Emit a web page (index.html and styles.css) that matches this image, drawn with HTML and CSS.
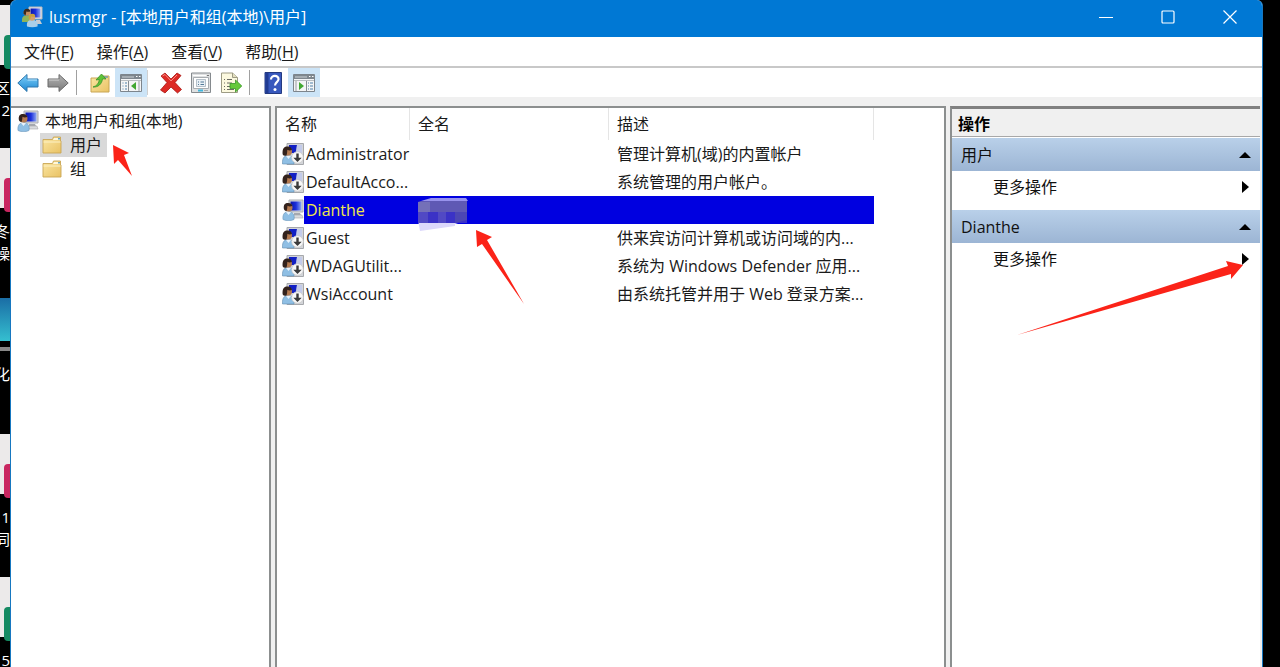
FILE: index.html
```html
<!DOCTYPE html>
<html lang="zh-Hans">
<head>
    <meta charset="UTF-8">
    <title>lusrmgr - [本地用户和组(本地)\用户]</title>
    <meta name="viewport" content="width=device-width, initial-scale=1">
    <link rel="stylesheet" href="styles.css">
</head>
<body>
    <!-- shared icons -->
    <svg class="defs" aria-hidden="true">
        <linearGradient id="g-folder" x1="0" y1="0" x2="1" y2="1">
            <stop offset="0" stop-color="#fbe7a4"/><stop offset="1" stop-color="#e9c264"/>
        </linearGradient>
        <linearGradient id="g-blue" x1="0" y1="0" x2="0" y2="1">
            <stop offset="0" stop-color="#7fd0fa"/><stop offset="1" stop-color="#1c86d1"/>
        </linearGradient>
        <linearGradient id="g-gray" x1="0" y1="0" x2="0" y2="1">
            <stop offset="0" stop-color="#b4b4b4"/><stop offset="1" stop-color="#7a7a7a"/>
        </linearGradient>
        <linearGradient id="g-screen" x1="0" y1="0" x2="1" y2="0">
            <stop offset="0" stop-color="#0a14a8"/><stop offset=".5" stop-color="#1c30dc"/><stop offset="1" stop-color="#8fa8f2"/>
        </linearGradient>
        <symbol id="user" viewBox="0 0 22 22">
            <path d="M7 1h14v12H7z" fill="#d4d6da" stroke="#a9acb2"/>
            <path d="M8.500 2.500h11v9h-11z" fill="url(#g-screen)"/>
            <path d="M12 14h6l1 2h-7z" fill="#a5a9b0"/>
            <path d="M11 16h9l1 3h-9z" fill="#d9dbde" stroke="#aaa" stroke-width=".6"/>
            <path d="M1 20.500c-.6-4 .8-6.500 3-7.500h4.500c3 .8 4.200 3 3.500 7.500-3 1.600-8 1.600-11 0z" fill="#8fbfe4" stroke="#6b97bb" stroke-width=".6"/>
            <path d="M4 13l2.500 3 2.500-3z" fill="#e9f3fb"/>
            <circle cx="6.500" cy="8.500" r="4" fill="#b47a50"/>
            <path d="M1.800 9.500C1.500 5.500 3 4 6 4c2.500 0 4 1 4.300 3-2 .6-3.600.5-4.800-.2-.2 2-.4 4-1 5.200-1.500-.2-2.500-1-2.700-2.500z" fill="#33221c"/>
        </symbol>
        <symbol id="user-off" viewBox="0 0 22 22">
            <path d="M5 .5h16.500v21H5z" fill="#d3d5d9" stroke="#a6a8ac"/>
            <path d="M7 2h8l-1 8H7z" fill="#1220c4"/>
            <path d="M15 2h5v8h-6z" fill="#c3cbea"/>
            <path d="M.5 21c-.4-4 .6-7 3-8h5c3 .8 4 3.500 3.500 8z" fill="#8fbfe4" stroke="#5f8bb0" stroke-width=".6"/>
            <path d="M4 13l2.500 3 2.500-3z" fill="#e9f3fb"/>
            <circle cx="6" cy="8.500" r="4" fill="#b47a50"/>
            <path d="M.6 11C.2 5 2.500 3 6 3.500c2.500.2 3.700 1.500 4 3.500-2 .6-3.600.5-4.600-.2-.2 2-.4 4.500-1 6-2-.2-3.600-.3-3.800-1.800z" fill="#33221c"/>
            <circle cx="15.500" cy="14.500" r="5.800" fill="#f8f8f8" stroke="#c9c9c9" stroke-width=".8"/>
            <path d="M14.300 10.500h2.400v4.300h3l-4.200 4.200-4.200-4.200h3z" fill="#3a3a3a"/>
        </symbol>
        <symbol id="folder" viewBox="0 0 20 18">
            <path d="M1 3.500h9.500l1-2.500h7v4H19v12H1z" fill="url(#g-folder)" stroke="#c9a655" stroke-width=".9"/>
            <path d="M12 2h6v2h-7z" fill="#fff7dc"/>
            <path d="M16 2h2v1.500h-2z" fill="#68a7bd"/>
            <path d="M1.500 6h17" stroke="#fdf1c4"/>
        </symbol>
    </svg>

    <div class="desktop">
        <div class="shortcuts">
            <div class="shortcut">
                <div class="thumb"><span class="badge green"></span></div>
                <div class="caption">区<br>2</div>
            </div>
            <div class="shortcut">
                <div class="thumb"><span class="badge pink"></span></div>
                <div class="caption">冬<br>操</div>
            </div>
            <div class="shortcut">
                <div class="thumb photo"></div>
                <div class="caption">化</div>
            </div>
            <div class="shortcut">
                <div class="thumb"><span class="badge pink"></span></div>
                <div class="caption">1<br>同</div>
            </div>
            <div class="shortcut">
                <div class="thumb"><span class="badge green"></span></div>
                <div class="caption">5</div>
            </div>
        </div>

        <div class="window">
            <header class="titlebar">
                <svg class="app-icon" viewBox="0 0 22 22">
                    <path d="M8 1h13v12H8z" fill="#e2e4e8" stroke="#b4b8be"/>
                    <path d="M9.500 2.500h10v9h-10z" fill="url(#g-screen)"/>
                    <path d="M15 14h4l2 4h-6z" fill="#c8cbd0"/>
                    <path d="M1 16c-.4-4 .6-6 3-6.500h4c2 .5 3 2.500 3 6.500z" fill="#8db45c"/>
                    <circle cx="6" cy="6.500" r="3.300" fill="#c58d5e"/>
                    <path d="M2.500 7.500C2.200 4 4 2.500 6.500 2.700 9 3 9.500 4.500 9.300 5.500c-2 .5-3 .3-4 0-.2 2-.5 3-1 4z" fill="#3b2a1d"/>
                    <path d="M6 20.500c-.5-4 .8-6 3.500-6.500h3.500c2.500.5 4 2.500 3.500 6.500-3 1-7.500 1-10.500 0z" fill="#a9cfe9"/>
                    <circle cx="11" cy="11.500" r="3.200" fill="#d3a06f"/>
                    <path d="M7.600 12C7.400 9 9 7.700 11.200 7.700c2.300 0 3.300 1.300 3.100 3-2 .3-3.300.2-4.300-.4-.2 1.700-.5 2.600-1 3.500z" fill="#c9a13c"/>
                </svg>
                <h1 class="title">lusrmgr - [本地用户和组(本地)\用户]</h1>
                <div class="controls">
                    <button type="button" aria-label="最小化"><svg viewBox="0 0 14 14"><path d="M0 7.500h14"/></svg></button>
                    <button type="button" aria-label="最大化"><svg viewBox="0 0 14 14"><rect x="1" y="1" width="12" height="12" rx="1"/></svg></button>
                    <button type="button" aria-label="关闭"><svg viewBox="0 0 14 14"><path d="M.5.5l13 13M13.500.5l-13 13"/></svg></button>
                </div>
            </header>

            <nav class="menubar">
                <button type="button">文件(<u>F</u>)</button>
                <button type="button">操作(<u>A</u>)</button>
                <button type="button">查看(<u>V</u>)</button>
                <button type="button">帮助(<u>H</u>)</button>
            </nav>

            <div class="toolbar">
                <button type="button" aria-label="后退">
                    <svg viewBox="0 0 22 22"><path d="M.8 11L10 2.500v4.500h11v8H10v4.500z" fill="url(#g-blue)" stroke="#2e77ad"/><path d="M10.500 8h9.500" stroke="#b7e6ff"/></svg>
                </button>
                <button type="button" aria-label="前进">
                    <svg viewBox="0 0 22 22"><path d="M21.200 11L12 2.500v4.500H1v8h11v4.500z" fill="url(#g-gray)" stroke="#6b6b6b"/><path d="M2 8h10" stroke="#cfcfcf"/></svg>
                </button>
                <span class="sep"></span>
                <button type="button" aria-label="上一级">
                    <svg viewBox="0 0 22 22">
                        <path d="M2 6h8l2-2h8v16H2z" fill="url(#g-folder)" stroke="#c9a655"/>
                        <path d="M14 5h5" stroke="#7397a8" stroke-width="1.500"/>
                        <path d="M4 15c4-1 6-4 6.300-7.500L7 8l5.500-6L17 7l-3.500-.2C13 12 9 15.500 4 15z" fill="#5ec336" stroke="#37932a" stroke-width=".8"/>
                    </svg>
                </button>
                <button type="button" class="on" aria-label="显示/隐藏控制台树">
                    <svg viewBox="0 0 22 22">
                        <path d="M.5 2.500h21v17H.5z" fill="#f4f5f6" stroke="#7d858c"/>
                        <path d="M1 3h20v4H1z" fill="#7f878e"/>
                        <path d="M2 5h12" stroke="#cfd4d8"/><path d="M16 4.500h1.500M19 4.500h1.500" stroke="#fff"/>
                        <path d="M1 8.500h20" stroke="#b9bec2"/><path d="M8.500 9v10" stroke="#858c92"/><path d="M19 9v10" stroke="#999fa4"/>
                        <path d="M2.500 11h1M2.500 14h1M2.500 17h1M5 11h2M5 14h2M5 17h2" stroke="#4f80a9"/>
                        <path d="M16 10v8l-5-4z" fill="#42a832"/>
                    </svg>
                </button>
                <span class="sep light"></span>
                <button type="button" aria-label="删除">
                    <svg viewBox="0 0 22 22"><path d="M1 4l4-3 6 6 6-6 4 2.500-6 7 6.500 7-4 3.500L11 15l-6 6-4.500-3L7 10.500z" fill="#dd2a25" stroke="#a91713" stroke-width=".8"/><path d="M2.500 4L5 2.500l6 6.500 6-6" fill="none" stroke="#fa8880"/></svg>
                </button>
                <button type="button" aria-label="属性">
                    <svg viewBox="0 0 22 22">
                        <path d="M1.500 1h19v19.500h-19z" fill="#dfe1e2" stroke="#858a8e"/>
                        <path d="M3 3.500h13" stroke="#fff"/><path d="M17 3.500h2" stroke="#777"/>
                        <path d="M3.500 5.500h15v11h-15z" fill="#fff" stroke="#a8adb1"/>
                        <path d="M6.500 7.500h9v7h-9z" fill="#e9f0f5" stroke="#9aa8b3" stroke-width=".7"/>
                        <path d="M8 10h1M10.500 10H14M8 12.500h1M10.500 12.500H14" stroke="#527897"/>
                        <path d="M8 18.500h5" stroke="#3eb6dd" stroke-width="2"/><path d="M14 18.500h4" stroke="#aaa"/>
                    </svg>
                </button>
                <button type="button" aria-label="导出列表">
                    <svg viewBox="0 0 22 22">
                        <path d="M1.500 1h11l5 4.500v15h-16z" fill="#fcf9df" stroke="#9d9b84"/>
                        <path d="M12.500 1v4.500h5" fill="#e3dfbf" stroke="#9d9b84"/>
                        <path d="M4 7.500h1M7 7.500h5M4 11h1M7 11h5M4 14.500h1M7 14.500h5M4 17.500h1M7 17.500h7" stroke="#6b6b63"/>
                        <path d="M10 11.500h5.500V8l6.300 6-6.300 6v-3.500H10z" fill="#65c93b" stroke="#39962a" stroke-width=".8"/>
                    </svg>
                </button>
                <span class="sep"></span>
                <button type="button" aria-label="帮助">
                    <svg viewBox="0 0 22 22">
                        <path d="M3 .5h16.500v21H3z" fill="#3758bd" stroke="#243a80"/><path d="M3.500 1h3v20h-3z" fill="#213b92"/>
                        <path d="M9 7.500c0-5 8-4.500 7.500 0-.3 2.500-3.500 3-3.500 6" fill="none" stroke="#fff" stroke-width="2.200"/>
                        <circle cx="13" cy="17.500" r="1.500" fill="#fff"/>
                    </svg>
                </button>
                <button type="button" class="on" aria-label="显示/隐藏操作窗格">
                    <svg viewBox="0 0 22 22">
                        <path d="M.5 2.500h21v17H.5z" fill="#f4f5f6" stroke="#7d858c"/>
                        <path d="M1 3h20v4H1z" fill="#7f878e"/>
                        <path d="M2 5h12" stroke="#cfd4d8"/><path d="M16 4.500h1.500M19 4.500h1.500" stroke="#fff"/>
                        <path d="M1 8.500h20" stroke="#b9bec2"/><path d="M13.500 9v10" stroke="#858c92"/><path d="M3 9v10" stroke="#999fa4"/>
                        <path d="M15 11h1M15 14h1M15 17h1M17 11h3M17 14h3M17 17h3" stroke="#4f80a9"/>
                        <path d="M6 10v8l5-4z" fill="#42a832"/>
                    </svg>
                </button>
            </div>

            <main class="panes">
                <section class="pane tree">
                    <ul>
                        <li class="root"><svg class="icon"><use href="#user"/></svg><span>本地用户和组(本地)</span></li>
                        <li class="child selected">
                            <svg class="folder"><use href="#folder"/></svg><span>用户</span>
                            <svg class="pointer pointer-tree" viewBox="0 0 20 32"><path d="M0 0l16 8-5 2 8 21L5 15l-4 4z"/></svg>
                        </li>
                        <li class="child"><svg class="folder"><use href="#folder"/></svg><span>组</span></li>
                    </ul>
                </section>

                <section class="pane list">
                    <table>
                        <thead>
                            <tr><th class="col-name">名称</th><th class="col-full">全名</th><th class="col-desc">描述</th></tr>
                        </thead>
                        <tbody>
                            <tr><td><div class="name"><svg class="icon"><use href="#user-off"/></svg><span>Administrator</span></div></td><td></td><td>管理计算机(域)的内置帐户</td></tr>
                            <tr><td><div class="name"><svg class="icon"><use href="#user-off"/></svg><span>DefaultAcco...</span></div></td><td></td><td>系统管理的用户帐户。</td></tr>
                            <tr class="selected">
                                <td><div class="name"><svg class="icon"><use href="#user"/></svg><span>Dianthe</span></div></td>
                                <td>
                                    <svg class="smudge" viewBox="0 0 50 33">
                                        <path d="M0 22h49l-12 4v2L2 33z" fill="#dcd8fb"/>
                                        <path d="M0 4l3-1h46v11H0z" fill="#5f59b4"/>
                                        <path d="M0 4h12v10H0z" fill="#7470b8"/>
                                        <path d="M0 14h49v11H0z" fill="#3b32c6"/>
                                        <path d="M0 14h10v11H0zM20 14h8v11h-8z" fill="#5149c4"/>
                                        <path d="M37 14h12v8l-12 3z" fill="#4c46b4"/>
                                        <path d="M3 3l10-3h35l2 3z" fill="#9893ec"/>
                                    </svg>
                                    <svg class="pointer pointer-list" viewBox="0 0 49 75"><path d="M0 0l16 7-5 3 37 64L6 14l-5 3z"/></svg>
                                </td>
                                <td></td>
                            </tr>
                            <tr><td><div class="name"><svg class="icon"><use href="#user-off"/></svg><span>Guest</span></div></td><td></td><td>供来宾访问计算机或访问域的内...</td></tr>
                            <tr><td><div class="name"><svg class="icon"><use href="#user-off"/></svg><span>WDAGUtilit...</span></div></td><td></td><td>系统为 Windows Defender 应用...</td></tr>
                            <tr><td><div class="name"><svg class="icon"><use href="#user-off"/></svg><span>WsiAccount</span></div></td><td></td><td>由系统托管并用于 Web 登录方案...</td></tr>
                        </tbody>
                    </table>
                </section>

                <aside class="pane actions">
                    <h2>操作</h2>
                    <button type="button" class="group">用户<svg class="up" viewBox="0 0 12 6"><path d="M6 0l6 6H0z"/></svg></button>
                    <button type="button" class="more">更多操作<svg class="right" viewBox="0 0 7 12"><path d="M0 0l7 6-7 6z"/></svg></button>
                    <button type="button" class="group">Dianthe<svg class="up" viewBox="0 0 12 6"><path d="M6 0l6 6H0z"/></svg></button>
                    <button type="button" class="more">更多操作<svg class="right" viewBox="0 0 7 12"><path d="M0 0l7 6-7 6z"/></svg></button>
                    <svg class="pointer pointer-actions" viewBox="0 0 226 74"><path d="M226 4L209 0l2 5L0 74l214-61v5z"/></svg>
                </aside>
            </main>
        </div>
    </div>
</body>
</html>
```

FILE: styles.css
```css
* {
    box-sizing: border-box;
}
body {
    margin: 0;
    background: #000;
    color: #1a1a1a;
    font: 16px/24px "Open Sans", "Noto Sans CJK SC", sans-serif;
    overflow: hidden;
}
button {
    margin: 0;
    padding: 0;
    border: 0;
    background: none;
    color: inherit;
    font: inherit;
}
h1, h2, ul {
    margin: 0;
    padding: 0;
    font-size: 16px;
    font-weight: normal;
    list-style: none;
}
svg {
    display: block;
    flex: none;
}
.defs {
    position: absolute;
    width: 0;
    height: 0;
}
.desktop {
    display: flex;
    min-height: 100vh;
    padding-right: 17px;
}

/* desktop icons behind the window */
.shortcuts {
    flex: none;
    width: 10px;
    height: 100vh;
    padding-top: 5px;
    overflow: hidden;
}
.shortcut {
    height: 143px;
}
.thumb {
    position: relative;
    height: 60px;
    background: #eceaea;
}
.photo {
    background: linear-gradient(#000 7px, #1a6da5 7px, #35bfd0 50px, #000 50px, #000 56px, #888 56px);
}
.badge {
    position: absolute;
    left: 4px;
    top: 30px;
    width: 12px;
    height: 34px;
    border-radius: 4px;
}
.green {
    background: #158a62;
}
.pink {
    background: #c92660;
}
.caption {
    margin-left: -20px;
    padding-top: 12px;
    color: #fff;
    font-size: 15px;
    line-height: 22px;
    text-align: right;
}

.window {
    flex: 1;
    display: flex;
    flex-direction: column;
    min-width: 0;
    background: #f0f0f0;
    border: solid #1677c0;
    border-width: 0 1px;
    border-radius: 6px 6px 0 0;
    overflow: hidden;
}
.titlebar {
    display: flex;
    align-items: center;
    height: 37px;
    padding: 0 1px 4px 10px;
    background: #0078d4;
    color: #fff;
}
.app-icon {
    width: 22px;
    height: 22px;
}
.title {
    margin-left: 6px;
}
.controls {
    display: flex;
    margin-left: auto;
}
.controls button {
    display: grid;
    place-items: center;
    width: 62px;
    height: 32px;
}
.controls svg {
    width: 14px;
    height: 14px;
    fill: none;
    stroke: #fff;
    stroke-width: 1.2;
}
.menubar {
    display: flex;
    gap: 23px;
    height: 31px;
    padding: 0 13px;
    background: #fff;
    border-bottom: 2px solid #c8c8c8;
}
.menubar u {
    text-underline-offset: 2px;
}
.toolbar {
    display: flex;
    align-items: center;
    height: 29px;
    padding-left: 2px;
    background: #fff;
}
.toolbar button {
    display: grid;
    place-items: center;
    width: 30px;
    height: 29px;
}
.toolbar svg {
    width: 22px;
    height: 22px;
}
.toolbar .on {
    width: 32px;
    background: #cce4f7;
}
.sep {
    width: 1px;
    height: 25px;
    margin: 0 8px 0 3px;
    background: #a0a0a0;
}
.sep.light {
    margin-left: 0;
    background: #d0d0d0;
}

.panes {
    flex: 1;
    display: flex;
    gap: 4px;
    padding: 9px 2px 0 0;
}
.pane {
    background: #fff;
    border: 2px solid #8c8f8f;
    border-bottom: 0;
}
.icon {
    width: 22px;
    height: 22px;
}
.tree {
    width: 260px;
    border-left: 0;
    padding-top: 1px;
}
.tree li {
    display: flex;
    align-items: center;
    height: 24px;
}
.tree .root {
    gap: 6px;
    padding-left: 6px;
}
.tree .child {
    position: relative;
    width: max-content;
    gap: 8px;
    margin-left: 29px;
    padding: 0 5px 0 2px;
}
.tree .selected {
    background: #d9d9d9;
}
.folder {
    width: 20px;
    height: 18px;
}

.list {
    flex: 1;
    min-width: 0;
}
table {
    table-layout: fixed;
    width: 597px;
    border-collapse: separate;
    border-spacing: 0;
    white-space: nowrap;
}
th, td {
    padding: 0 0 0 8px;
    text-align: left;
    font-weight: normal;
}
th {
    height: 32px;
    border-right: 1px solid #e5e5e5;
}
td {
    position: relative;
    height: 28px;
}
.col-name {
    width: 133px;
}
.col-full {
    width: 199px;
}
td:first-child {
    padding-left: 5px;
}
.name {
    display: flex;
    align-items: center;
}
.name span {
    flex: 1;
    padding-left: 2px;
    line-height: 28px;
}
.list .selected td:not(:first-child),
.list .selected .name span {
    background: #0000e0;
    color: #f0e84a;
}
.smudge {
    position: absolute;
    left: 8px;
    top: 2px;
    width: 50px;
    height: 33px;
}

.actions {
    position: relative;
    width: 310px;
    border-top: 3px solid #808080;
    border-right: 0;
}
.actions h2 {
    height: 28px;
    margin-bottom: 1px;
    padding-left: 6px;
    background: #f0f0f0;
    border-bottom: 1px solid #a8a8a8;
    color: #000;
    font-weight: bold;
    line-height: 30px;
}
.actions button {
    display: flex;
    align-items: center;
    justify-content: space-between;
    width: 100%;
    height: 33px;
    color: #111;
}
.actions .group {
    padding: 0 9px;
    background: linear-gradient(#b9d0e9, #9cb5d4);
}
.actions .more {
    height: 32px;
    margin-bottom: 7px;
    padding: 0 11px 0 41px;
}
.up {
    width: 12px;
    height: 6px;
}
.right {
    width: 7px;
    height: 12px;
}

/* red arrows laid over the panes */
.pointer {
    position: absolute;
    z-index: 1;
    fill: #fb2318;
}
.pointer-tree {
    left: 73px;
    top: 12px;
    width: 20px;
    height: 32px;
}
.pointer-list {
    left: 66px;
    top: 34px;
    width: 49px;
    height: 75px;
}
.pointer-actions {
    right: 17px;
    top: 152px;
    width: 226px;
    height: 74px;
}
```
